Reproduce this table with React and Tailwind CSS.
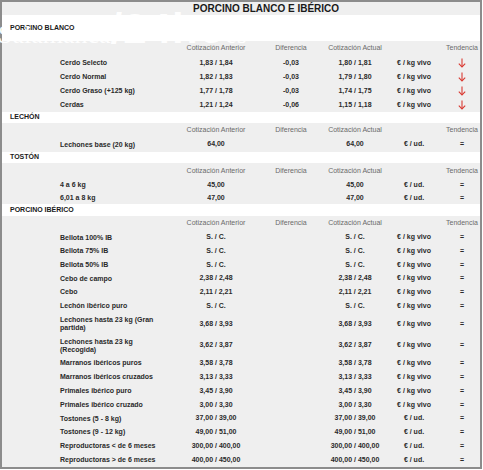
import React from 'react'

const grid = 'grid grid-cols-[58px_118px_76px_74px_54px_64px_32px]'

const sections = [
  {
    title: 'PORCINO BLANCO',
    h: 'h-[31px]',
    rows: [
      { name: 'Cerdo Selecto', ant: '1,83 / 1,84', dif: '-0,03', act: '1,80 / 1,81', unit: '€ / kg vivo', down: true },
      { name: 'Cerdo Normal', ant: '1,82 / 1,83', dif: '-0,03', act: '1,79 / 1,80', unit: '€ / kg vivo', down: true },
      { name: 'Cerdo Graso (+125 kg)', ant: '1,77 / 1,78', dif: '-0,03', act: '1,74 / 1,75', unit: '€ / kg vivo', down: true },
      { name: 'Cerdas', ant: '1,21 / 1,24', dif: '-0,06', act: '1,15 / 1,18', unit: '€ / kg vivo', down: true },
    ],
  },
  {
    title: 'LECHÓN',
    h: 'h-[13px]',
    rows: [{ name: 'Lechones base (20 kg)', ant: '64,00', act: '64,00', unit: '€ / ud.' }],
  },
  {
    title: 'TOSTÓN',
    h: 'h-[14px]',
    rows: [
      { name: '4 a 6 kg', ant: '45,00', act: '45,00', unit: '€ / ud.', h: 'h-[13px]' },
      { name: '6,01 a 8 kg', ant: '47,00', act: '47,00', unit: '€ / ud.', h: 'h-[13px]' },
    ],
  },
  {
    title: 'PORCINO IBÉRICO',
    h: 'h-[14px]',
    rows: [
      { name: 'Bellota 100% IB', ant: 'S. / C.', act: 'S. / C.', unit: '€ / kg vivo', h: 'h-[13px]' },
      { name: 'Bellota 75% IB', ant: 'S. / C.', act: 'S. / C.', unit: '€ / kg vivo' },
      { name: 'Bellota 50% IB', ant: 'S. / C.', act: 'S. / C.', unit: '€ / kg vivo' },
      { name: 'Cebo de campo', ant: '2,38 / 2,48', act: '2,38 / 2,48', unit: '€ / kg vivo', h: 'h-[13px]' },
      { name: 'Cebo', ant: '2,11 / 2,21', act: '2,11 / 2,21', unit: '€ / kg vivo' },
      { name: 'Lechón ibérico puro', ant: 'S. / C.', act: 'S. / C.', unit: '€ / kg vivo' },
      { name: 'Lechones hasta 23 kg (Gran partida)', ant: '3,68 / 3,93', act: '3,68 / 3,93', unit: '€ / kg vivo', h: 'h-[22px]' },
      { name: 'Lechones hasta 23 kg (Recogida)', ant: '3,62 / 3,87', act: '3,62 / 3,87', unit: '€ / kg vivo', h: 'h-[21px]' },
      { name: 'Marranos ibéricos puros', ant: '3,58 / 3,78', act: '3,58 / 3,78', unit: '€ / kg vivo' },
      { name: 'Marranos ibéricos cruzados', ant: '3,13 / 3,33', act: '3,13 / 3,33', unit: '€ / kg vivo' },
      { name: 'Primales ibérico puro', ant: '3,45 / 3,90', act: '3,45 / 3,90', unit: '€ / kg vivo' },
      { name: 'Primales ibérico cruzado', ant: '3,00 / 3,30', act: '3,00 / 3,30', unit: '€ / kg vivo' },
      { name: 'Tostones (5 - 8 kg)', ant: '37,00 / 39,00', act: '37,00 / 39,00', unit: '€ / ud.', h: 'h-[13px]' },
      { name: 'Tostones (9 - 12 kg)', ant: '49,00 / 51,00', act: '49,00 / 51,00', unit: '€ / ud.' },
      { name: 'Reproductoras < de 6 meses', ant: '300,00 / 400,00', act: '300,00 / 400,00', unit: '€ / ud.' },
      { name: 'Reproductoras > de 6 meses', ant: '400,00 / 450,00', act: '400,00 / 450,00', unit: '€ / ud.' },
    ],
  },
]

function DownArrow() {
  return (
    <svg width="8" height="10" viewBox="0 0 8 10" fill="none" stroke="#d93a32" strokeWidth="1.1">
      <path d="M4 0.5V9" />
      <path d="M0.8 5.6L4 9L7.2 5.6" />
    </svg>
  )
}

function Cell({ children }) {
  return <div className="flex items-center justify-center whitespace-nowrap">{children}</div>
}

function Section({ section }) {
  return (
    <>
      <div className={`${section.h} flex items-center pl-[8px] bg-white text-[7px] font-bold text-[#1a1a1a]`}>
        {section.title}
      </div>
      <div className="bg-[#efefef]">
        <div className={`${grid} h-[15px] text-[7px] text-[#6a6a6a]`}>
          <div />
          <div />
          <Cell>Cotización Anterior</Cell>
          <Cell>Diferencia</Cell>
          <Cell>Cotización Actual</Cell>
          <div />
          <Cell>Tendencia</Cell>
        </div>
        {section.rows.map((r) => (
          <div key={r.name} className={`${grid} ${r.h || 'h-[14px]'} text-[7px] font-bold text-[#2a2a2a]`}>
            <div />
            <div className="flex items-center">
              <span className="max-w-[104px] leading-[8px]">{r.name}</span>
            </div>
            <Cell>{r.ant}</Cell>
            <Cell>{r.dif || ''}</Cell>
            <Cell>{r.act}</Cell>
            <Cell>{r.unit}</Cell>
            <Cell>{r.down ? <DownArrow /> : '='}</Cell>
          </div>
        ))}
      </div>
    </>
  )
}

export default function App() {
  return (
    <div className="relative w-[483px] h-[470px] bg-white font-['Liberation_Sans',Arial,sans-serif] overflow-hidden">
      <div className="w-[482px] h-[469px] border-2 border-[#8c8c8c] bg-[#efefef] flex flex-col">
        {/* Title */}
        <div className="h-[13px] flex items-center pl-[191px] text-[10px] font-bold text-[#1a1a1a]">
          PORCINO BLANCO E IBÉRICO
        </div>
        {sections.map((s) => (
          <Section key={s.title} section={s} />
        ))}
      </div>

      {/* watermark */}
      <div className="absolute left-[-2px] top-[8px] flex items-baseline whitespace-nowrap leading-[42px] text-white opacity-95 pointer-events-none">
        <span className="font-['Liberation_Serif',serif] text-[26px]">Salamanca</span>
        <span className="font-['Liberation_Sans',sans-serif] font-bold text-[42px] tracking-[1px]">/24ho</span>
        <span className="font-['Liberation_Serif',serif] text-[26px]">es</span>
      </div>
    </div>
  )
}
